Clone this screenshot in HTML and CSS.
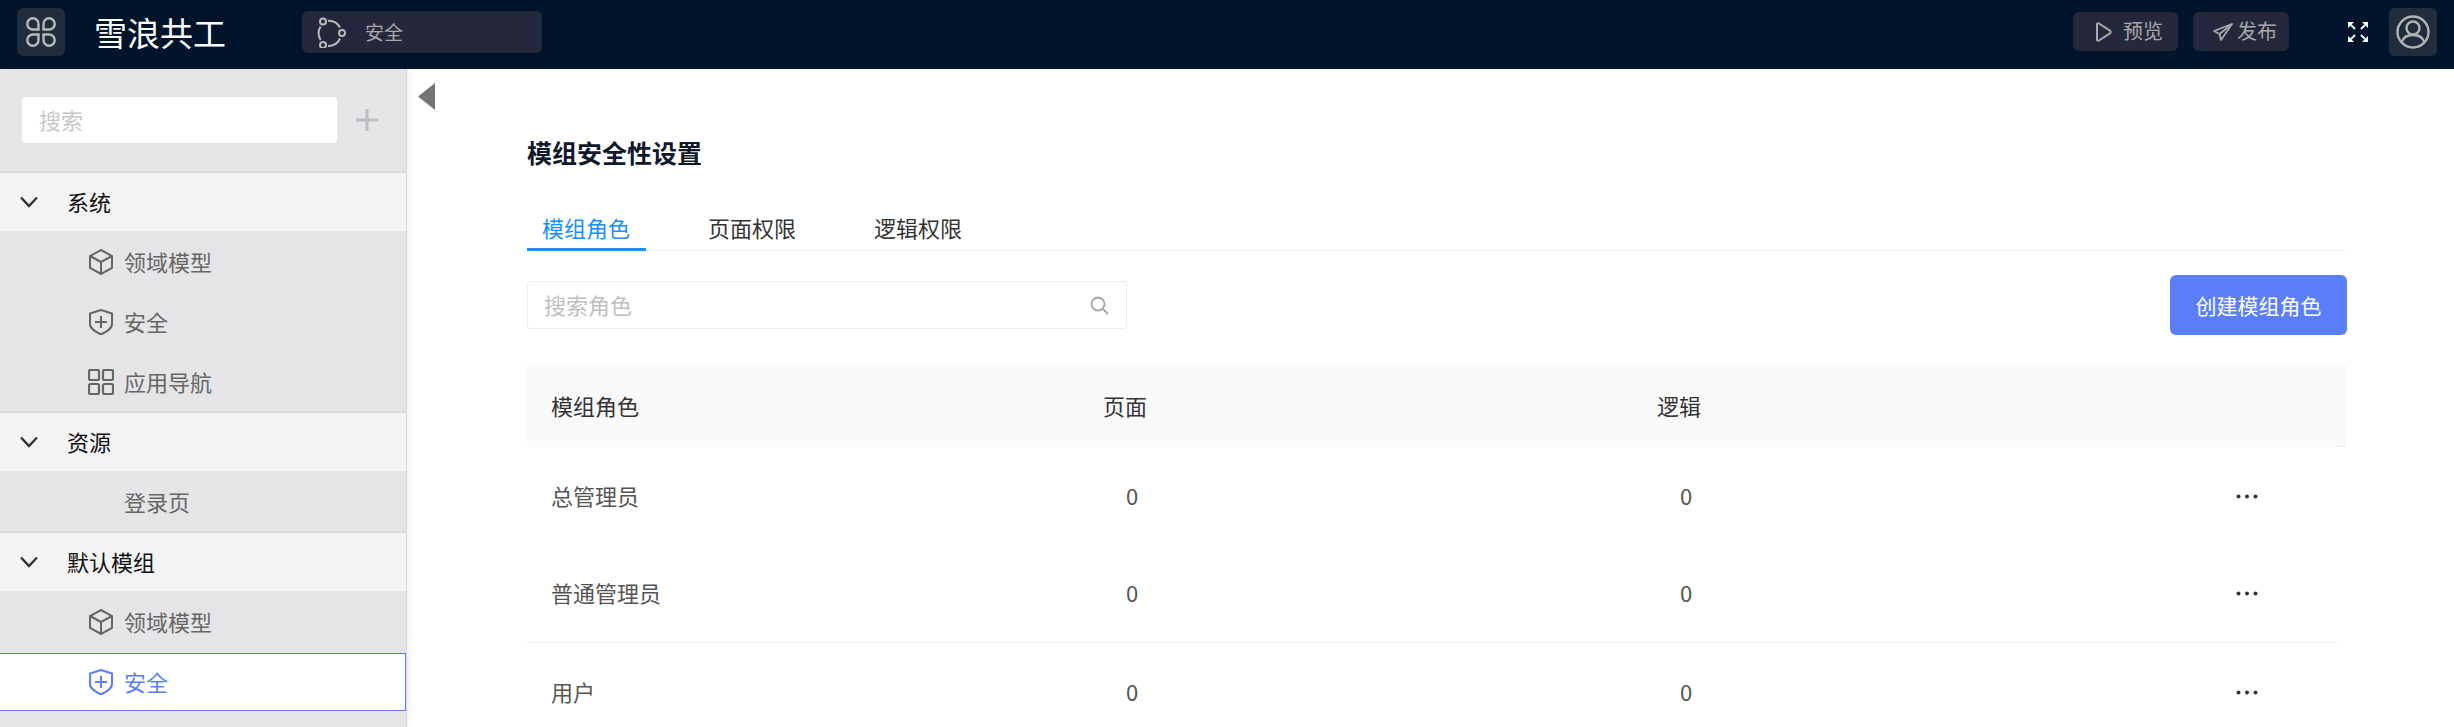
FILE: index.html
```html
<!DOCTYPE html>
<html lang="zh-CN">
<head>
<meta charset="utf-8">
<title>雪浪共工</title>
<link rel="stylesheet" href="styles.css">
</head>
<body>
<header class="topbar">
  <div class="icon-box logo-box">
    <svg width="30" height="30" viewBox="0 0 30 30" fill="none" stroke="#b9b9b9" stroke-width="2.400">
      <path d="M12.500 12.500H6.900A5.600 5.600 0 1 1 12.500 6.900Z"/>
      <path d="M17.500 12.500H23.100A5.600 5.600 0 1 0 17.500 6.900Z"/>
      <path d="M12.500 17.500H6.900A5.600 5.600 0 1 0 12.500 23.100Z"/>
      <path d="M17.500 17.500H23.100A5.600 5.600 0 1 1 17.500 23.100Z"/>
    </svg>
  </div>
  <div class="brand">雪浪共工</div>
  <div class="crumb">
    <svg width="29" height="31" viewBox="0 0 29 31" fill="none" stroke="#b9b9b9" stroke-width="2">
      <circle cx="6" cy="4.500" r="3"/><circle cx="25" cy="16" r="3"/><circle cx="6" cy="28" r="3"/>
      <path d="M11 3.800A13 13 0 0 1 23 10.500"/><path d="M23 21.500A13 13 0 0 1 11 29"/><path d="M3.600 23A13 13 0 0 1 3.600 9.500"/>
    </svg>
    <span>安全</span>
  </div>
  <div class="top-actions">
    <div class="top-btn btn-preview">
      <svg width="17" height="20" viewBox="0 0 17 20" fill="none" stroke="#a9a9a9" stroke-width="2" stroke-linejoin="round"><path d="M2 2.500C2 1.300 3 .9 4 1.500L15 8.700C16 9.400 16 10.600 15 11.300L4 18.500C3 19.100 2 18.700 2 17.500Z"/></svg>
      <span>预览</span>
    </div>
    <div class="top-btn btn-publish">
      <svg width="20" height="18" viewBox="0 0 20 18" fill="none" stroke="#a9a9a9" stroke-width="1.800" stroke-linejoin="round"><path d="M19 1 1 8 6.500 11 8 17Z"/><path d="M19 1 6.500 11"/></svg>
      <span>发布</span>
    </div>
    <svg class="fullscreen" width="20" height="20" viewBox="0 0 20 20" fill="#fff" stroke="#fff">
      <path d="M0 0H6L0 6Z" stroke="none"/><path d="M20 0H14L20 6Z" stroke="none"/><path d="M0 20H6L0 14Z" stroke="none"/><path d="M20 20H14L20 14Z" stroke="none"/>
      <path d="M3 3 7 7M17 3 13 7M3 17 7 13M17 17 13 13" stroke-width="1.800" fill="none"/>
    </svg>
    <div class="icon-box avatar-box">
      <svg width="34" height="34" viewBox="0 0 34 34" fill="none" stroke="#b3b3b3" stroke-width="2.400">
        <circle cx="17" cy="17" r="15.500"/><circle cx="17" cy="13" r="6.500"/><path d="M5.500 27.500C7 22.500 11.500 20 17 20S27 22.500 28.500 27.500"/>
      </svg>
    </div>
  </div>
</header>
<div class="layout">
  <aside class="sidebar">
    <div class="side-search">
      <div class="side-input">搜索</div>
      <svg width="22" height="22" viewBox="0 0 22 22" stroke="#bcbdc2" stroke-width="3"><path d="M0 11H22M11 0V22"/></svg>
    </div>
    <section class="group">
      <div class="group-head">
        <svg class="chev" width="18" height="12" viewBox="0 0 18 12" fill="none" stroke="#333" stroke-width="2.400"><path d="M1 1.500 9 10 17 1.500"/></svg>
        <span>系统</span>
      </div>
      <div class="item">
        <svg class="ico" width="26" height="26" viewBox="0 0 26 26" fill="none" stroke="currentColor" stroke-width="2"><path d="M13 1 24 7V19L13 25 2 19V7Z"/><path d="M2 7 13 13 24 7M13 13V25"/></svg>
        <span>领域模型</span>
      </div>
      <div class="item">
        <svg class="ico" width="26" height="26" viewBox="0 0 26 26" fill="none" stroke="currentColor" stroke-width="2"><path d="M13 1 24 4.500V15C24 20 18 23 13 25.500 8 23 2 20 2 15V4.500Z"/><path d="M7 13H19M13 7V19"/></svg>
        <span>安全</span>
      </div>
      <div class="item">
        <svg class="ico" width="26" height="26" viewBox="0 0 26 26" fill="none" stroke="currentColor" stroke-width="2.200"><rect x="1" y="1" width="10" height="10" rx="1.500"/><rect x="15" y="1" width="10" height="10" rx="1.500"/><rect x="1" y="15" width="10" height="10" rx="1.500"/><rect x="15" y="15" width="10" height="10" rx="1.500"/></svg>
        <span>应用导航</span>
      </div>
    </section>
    <section class="group">
      <div class="group-head">
        <svg class="chev" width="18" height="12" viewBox="0 0 18 12" fill="none" stroke="#333" stroke-width="2.400"><path d="M1 1.500 9 10 17 1.500"/></svg>
        <span>资源</span>
      </div>
      <div class="item">
        <span class="ico"></span>
        <span>登录页</span>
      </div>
    </section>
    <section class="group">
      <div class="group-head">
        <svg class="chev" width="18" height="12" viewBox="0 0 18 12" fill="none" stroke="#333" stroke-width="2.400"><path d="M1 1.500 9 10 17 1.500"/></svg>
        <span>默认模组</span>
      </div>
      <div class="item">
        <svg class="ico" width="26" height="26" viewBox="0 0 26 26" fill="none" stroke="currentColor" stroke-width="2"><path d="M13 1 24 7V19L13 25 2 19V7Z"/><path d="M2 7 13 13 24 7M13 13V25"/></svg>
        <span>领域模型</span>
      </div>
      <div class="item active">
        <svg class="ico" width="26" height="26" viewBox="0 0 26 26" fill="none" stroke="currentColor" stroke-width="2"><path d="M13 1 24 4.500V15C24 20 18 23 13 25.500 8 23 2 20 2 15V4.500Z"/><path d="M7 13H19M13 7V19"/></svg>
        <span>安全</span>
      </div>
    </section>
  </aside>
  <main class="content">
    <svg class="collapse" width="17" height="27" viewBox="0 0 17 27" fill="#757575"><path d="M17 0V27L0 13.500Z"/></svg>
    <h1 class="title">模组安全性设置</h1>
    <nav class="tabs">
      <span class="tab current">模组角色</span>
      <span class="tab">页面权限</span>
      <span class="tab">逻辑权限</span>
    </nav>
    <div class="toolbar">
      <div class="role-search">
        <span>搜索角色</span>
        <svg width="19" height="19" viewBox="0 0 19 19" fill="none" stroke="#a3a3a3" stroke-width="1.800"><circle cx="8" cy="8" r="6.500"/><path d="M12.500 12.500 18 18"/></svg>
      </div>
      <div class="create-btn">创建模组角色</div>
    </div>
    <div class="table">
      <div class="row row-head">
        <div class="cell-name">模组角色</div>
        <div>页面</div>
        <div>逻辑</div>
        <div></div>
      </div>
      <div class="row">
        <div class="cell-name">总管理员</div>
        <div class="cell-num">0</div>
        <div class="cell-num">0</div>
        <svg class="dots" width="22" height="5" viewBox="0 0 22 5" fill="#333"><circle cx="2.500" cy="2.500" r="2"/><circle cx="11" cy="2.500" r="2"/><circle cx="19.500" cy="2.500" r="2"/></svg>
      </div>
      <div class="row row-line">
        <div class="cell-name">普通管理员</div>
        <div class="cell-num">0</div>
        <div class="cell-num">0</div>
        <svg class="dots" width="22" height="5" viewBox="0 0 22 5" fill="#333"><circle cx="2.500" cy="2.500" r="2"/><circle cx="11" cy="2.500" r="2"/><circle cx="19.500" cy="2.500" r="2"/></svg>
      </div>
      <div class="row">
        <div class="cell-name">用户</div>
        <div class="cell-num">0</div>
        <div class="cell-num">0</div>
        <svg class="dots" width="22" height="5" viewBox="0 0 22 5" fill="#333"><circle cx="2.500" cy="2.500" r="2"/><circle cx="11" cy="2.500" r="2"/><circle cx="19.500" cy="2.500" r="2"/></svg>
      </div>
    </div>
  </main>
</div>
</body>
</html>
```
FILE: styles.css
```css
* { box-sizing: border-box; }
html, body { margin: 0; height: 727px; overflow: hidden; }
body {
  font-family: "Noto Sans CJK SC", "Noto Sans", sans-serif;
  font-size: 22px;
  color: #333;
  background: #fff;
}
svg { display: block; flex: none; }

.topbar {
  display: flex;
  align-items: center;
  height: 69px;
  padding: 0 17px 5px;
  background: #00152b;
}
.icon-box {
  display: flex;
  align-items: center;
  justify-content: center;
  width: 48px;
  height: 48px;
  background: #1f2d3d;
  border-radius: 6px;
}
.brand {
  margin-left: 29px;
  width: 132px;
  font-size: 33px;
  line-height: 44px;
  color: #fff;
}
.crumb {
  display: flex;
  align-items: center;
  gap: 19px;
  width: 240px;
  height: 42px;
  margin-left: 76px;
  padding-left: 15px;
  background: #25283d;
  border-radius: 6px;
  font-size: 19px;
  color: #a9a9a9;
}
.top-actions {
  display: flex;
  align-items: center;
  margin-left: auto;
}
.top-btn {
  display: flex;
  align-items: center;
  height: 39px;
  margin-bottom: 1px;
  background: #25283d;
  border-radius: 6px;
  font-size: 20px;
  color: #a9a9a9;
}
.btn-preview { width: 105px; padding-left: 22px; gap: 11px; }
.btn-publish { width: 96px; padding-left: 20px; gap: 4px; margin-left: 15px; }
.top-btn span, .crumb span { padding-bottom: 2px; }
.fullscreen { margin-left: 59px; }
.avatar-box { margin-left: 21px; }

.layout { display: flex; height: 658px; }
.sidebar {
  flex: none;
  width: 407px;
  height: 658px;
  overflow: hidden;
  background: #e5e5e8;
  border-right: 1px solid #d9d9d9;
  box-shadow: 2px 0 6px rgba(0, 0, 0, .06);
  z-index: 1;
}
.side-search {
  display: flex;
  align-items: center;
  gap: 19px;
  padding: 28px 0 28px 22px;
}
.side-input {
  width: 315px;
  height: 46px;
  padding-left: 17px;
  background: #fff;
  border-radius: 3px;
  line-height: 45px;
  color: #c8c8c8;
}
.group { border-top: 2px solid #dcdcdc; }
.group-head {
  display: flex;
  align-items: center;
  gap: 29px;
  height: 58px;
  padding-left: 20px;
  background: #f3f3f3;
  color: #111;
}
.group-head span, .item span { padding-bottom: 3px; }
.item {
  display: flex;
  align-items: center;
  gap: 10px;
  height: 58px;
  margin-top: 2px;
  padding-left: 88px;
  color: #666;
}
.ico { width: 26px; height: 26px; flex: none; }
.item.active {
  background: #fff;
  border: 1px solid #5b7ffb;
  border-left: 0;
  color: #5b7ffb;
}

.content {
  position: relative;
  flex: 1;
  min-width: 0;
  padding: 65px 107px 0 120px;
}
.collapse { position: absolute; left: 11px; top: 14px; }
.title {
  margin: 0;
  font-size: 25px;
  line-height: 36px;
  font-weight: 700;
  color: #10182b;
}
.tabs {
  display: flex;
  margin-top: 44px;
  border-bottom: 1px solid #f0f0f0;
}
.tab {
  padding: 0 16px 7px 15px;
  margin: 0 47px -1px 0;
  line-height: 27px;
  border-bottom: 3px solid transparent;
}
.tab.current {
  color: #1890ff;
  border-bottom-color: #1890ff;
}
.toolbar {
  display: flex;
  align-items: center;
  justify-content: space-between;
  margin-top: 24px;
}
.role-search {
  display: flex;
  align-items: center;
  justify-content: space-between;
  width: 600px;
  height: 48px;
  padding: 0 17px 0 16px;
  border: 1px solid #eeeeee;
  border-radius: 3px;
  color: #bfbfbf;
}
.role-search span { padding-bottom: 3px; }
.create-btn {
  width: 177px;
  height: 60px;
  background: #5b7ffb;
  border-radius: 6px;
  text-align: center;
  line-height: 60px;
  font-size: 21px;
  color: #fff;
}
.table { margin-top: 30px; }
.row {
  display: grid;
  grid-template-columns: 576px 554px 579px 1fr;
  align-items: center;
  height: 98px;
  color: #555;
}
.row > div { padding-bottom: 3px; }
.row-head {
  position: relative;
  height: 82px;
  background: #fafafa;
  color: #333;
}
.row-head::after {
  content: "";
  position: absolute;
  right: 0;
  bottom: 0;
  width: 10px;
  height: 1px;
  background: #eeeeee;
}
.row-line {
  margin-right: 10px;
  border-bottom: 1px solid #f0f0f0;
}
.cell-name { padding-left: 24px; }
.cell-num { padding-left: 23px; }
```
